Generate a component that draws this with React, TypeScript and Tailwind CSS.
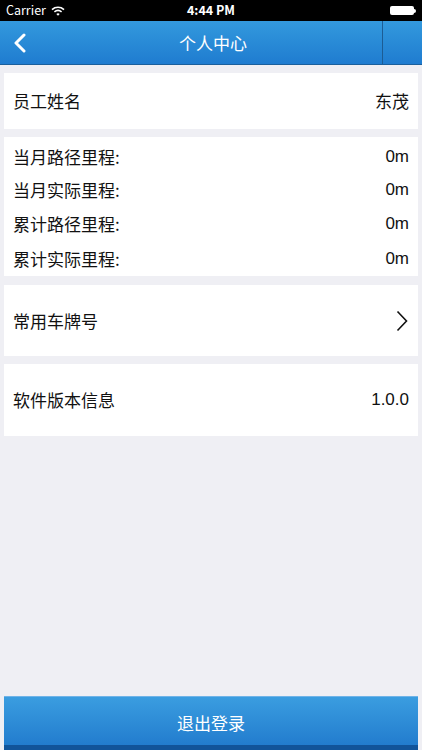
import React from "react";

const font = { fontFamily: '"Noto Sans CJK SC", "Liberation Sans", sans-serif' };

function StatusBar() {
  return (
    <div className="relative flex h-[21px] items-center bg-black px-[6px] text-white">
      <span className="text-[12.5px] leading-none" style={font}>Carrier</span>
      <svg width="14" height="10" viewBox="0 0 14 10" className="ml-[5px]">
        <path d="M1 3.6 A9 9 0 0 1 13 3.6" stroke="white" strokeWidth="1.6" fill="none" />
        <path d="M3.4 5.9 A5.6 5.6 0 0 1 10.6 5.9" stroke="white" strokeWidth="1.6" fill="none" />
        <path d="M5.3 8.1 L7 9.8 L8.7 8.1 A2.4 2.4 0 0 0 5.3 8.1 Z" fill="white" />
      </svg>
      <span className="absolute left-1/2 -translate-x-1/2 text-[12.5px] font-semibold leading-none" style={font}>
        4:44 PM
      </span>
      <div className="ml-auto flex items-center">
        <div className="h-[9px] w-[24px] rounded-[2px] bg-white" />
        <div className="h-[4px] w-[2px] rounded-r-sm bg-white" />
      </div>
    </div>
  );
}

function NavBar() {
  return (
    <div className="flex h-[44px] items-stretch border-b border-[#1a5f9c] bg-gradient-to-b from-[#3399dd] to-[#1f7cd0] text-white">
      <div className="flex w-[40px] items-center pl-[13px]">
        <svg width="13" height="20" viewBox="0 0 13 20">
          <path d="M11 2 L3 10 L11 18" stroke="white" strokeWidth="3" fill="none" strokeLinecap="round" strokeLinejoin="round" />
        </svg>
      </div>
      <div className="flex flex-1 items-center justify-center pl-[4px] text-[17px]" style={font}>
        个人中心
      </div>
      <div className="w-[40px] border-l border-[#1c5c94]" />
    </div>
  );
}

function Card({ children, className = "" }: { children: React.ReactNode; className?: string }) {
  return <div className={`mx-[4px] bg-white ${className}`}>{children}</div>;
}

export default function App() {
  const rows = [
    { label: "当月路径里程:", value: "0m", h: "h-[33px]" },
    { label: "当月实际里程:", value: "0m", h: "h-[33px]" },
    { label: "累计路径里程:", value: "0m", h: "h-[35px]" },
    { label: "累计实际里程:", value: "0m", h: "h-[35px]" },
  ];

  return (
    <div className="flex h-[750px] w-[422px] flex-col bg-[#efeff4] text-[#111]" style={font}>
      <StatusBar />
      <NavBar />

      <Card className="mt-[8px] flex h-[56px] items-center justify-between px-[9px] text-[17px]">
        <span>员工姓名</span>
        <span>东茂</span>
      </Card>

      <Card className="mt-[8px] flex flex-col pt-[3px] text-[17px]">
        {rows.map((r) => (
          <div key={r.label} className={`flex items-center justify-between px-[9px] ${r.h}`}>
            <span>{r.label}</span>
            <span style={{ fontFamily: '"Liberation Sans", sans-serif' }}>{r.value}</span>
          </div>
        ))}
      </Card>

      <Card className="mt-[9px] flex h-[71px] items-center justify-between pl-[9px] pr-[10px] text-[17px]">
        <span>常用车牌号</span>
        <svg width="12" height="22" viewBox="0 0 12 22">
          <path d="M1.5 1.5 L10.5 11 L1.5 20.5" stroke="#111" strokeWidth="1.6" fill="none" />
        </svg>
      </Card>

      <Card className="mt-[8px] flex h-[72px] items-center justify-between px-[9px] text-[17px]">
        <span>软件版本信息</span>
        <span style={{ fontFamily: '"Liberation Sans", sans-serif' }}>1.0.0</span>
      </Card>

      <div className="flex-1" />

      <button className="mx-[4px] flex h-[54px] flex-col border-t border-[#6fb3e8] bg-gradient-to-b from-[#3a9de0] to-[#2079cc] text-white">
        <span className="flex flex-1 items-center justify-center pt-[4px] text-[17px]" style={font}>
          退出登录
        </span>
        <span className="h-[5px] w-full bg-[#11549a]" />
      </button>
    </div>
  );
}
